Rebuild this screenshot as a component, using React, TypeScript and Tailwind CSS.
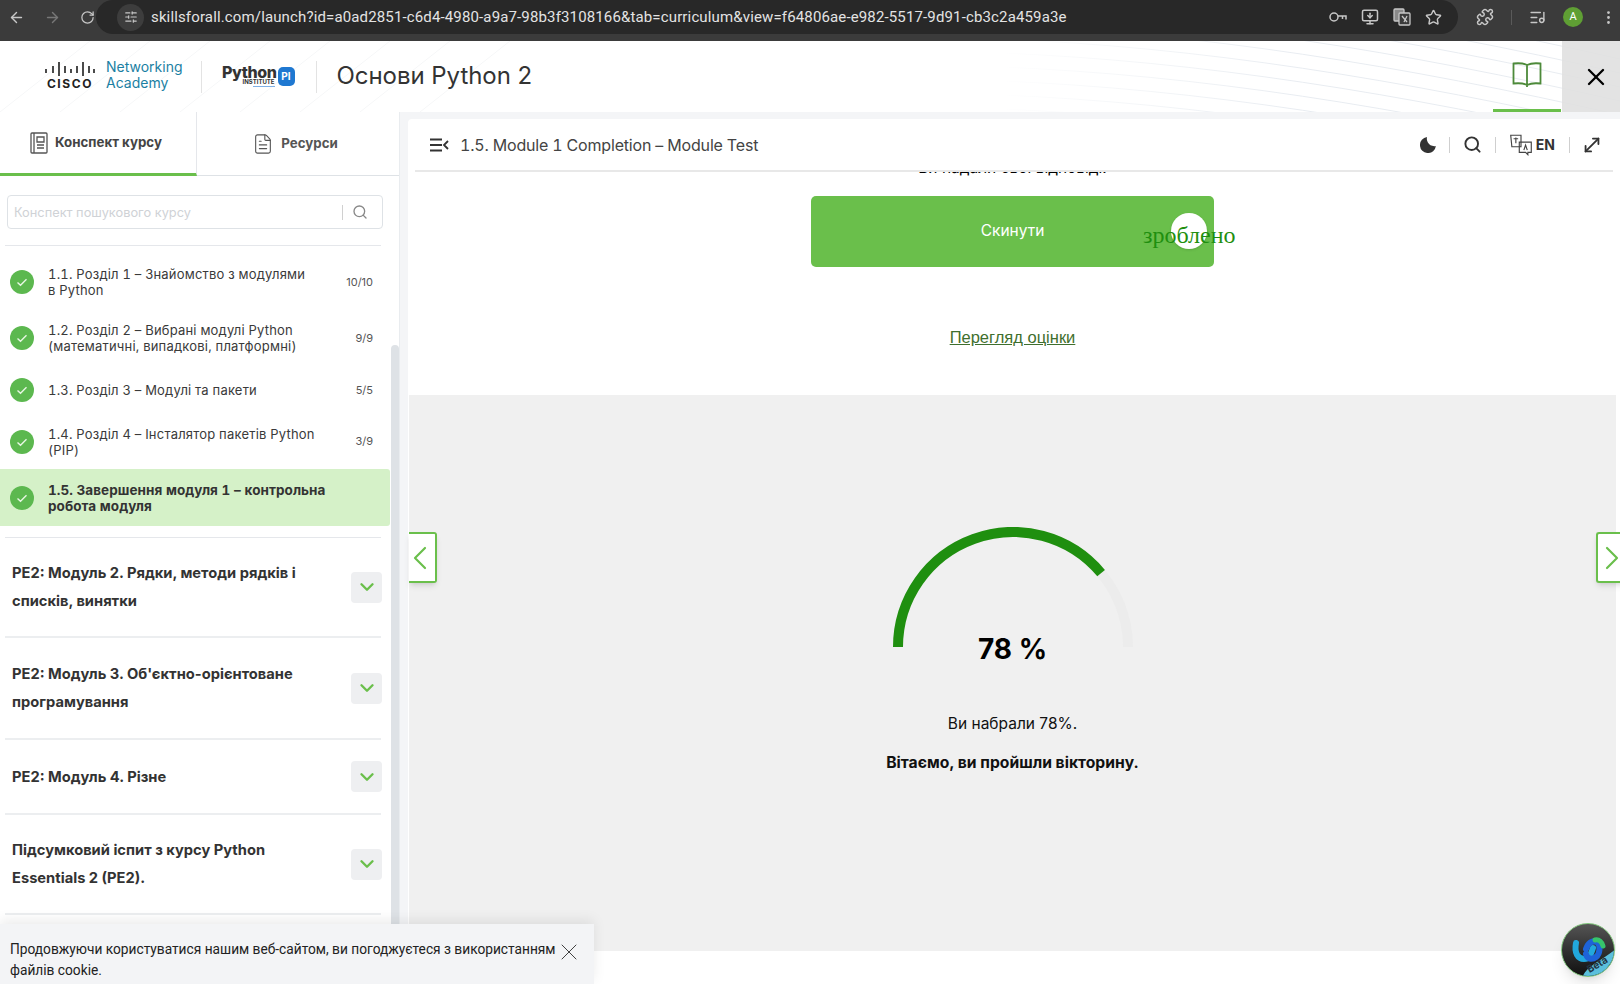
import {
  ArrowLeft,
  ArrowRight,
  ChevronDown,
  ChevronLeft,
  ChevronRight,
  EllipsisVertical,
  FileText,
  ListMusic,
  MonitorDown,
  MoveDiagonal,
  Puzzle,
  RotateCw,
  Search,
  SlidersHorizontal,
  Star,
  X,
} from 'lucide-react';

const lessons = [
  { title: '1.1. Розділ 1 – Знайомство з модулями\nв Python', count: '10/10', h: 'h-[56px]' },
  { title: '1.2. Розділ 2 – Вибрані модулі Python\n(математичні, випадкові, платформні)', count: '9/9', h: 'h-[56px]' },
  { title: '1.3. Розділ 3 – Модулі та пакети', count: '5/5', h: 'h-[48px]' },
  { title: '1.4. Розділ 4 – Інсталятор пакетів Python\n(PIP)', count: '3/9', h: 'h-[55px]' },
];

const modules = [
  { title: 'PE2: Модуль 2. Рядки, методи рядків і списків, винятки', h: 'h-[100px]' },
  { title: "PE2: Модуль 3. Об'єктно-орієнтоване програмування", h: 'h-[102px]' },
  { title: 'PE2: Модуль 4. Різне', h: 'h-[75px]' },
  { title: 'Підсумковий іспит з курсу Python Essentials 2 (PE2).', h: 'h-[100px]' },
];

const curves = [-100, -86, -72, -58, -44, -30, -16, -2, 12, 26, 40, 54, 68];

function CheckCircle() {
  return (
    <svg width="24" height="24" viewBox="0 0 24 24" className="shrink-0">
      <circle cx="12" cy="12" r="12" fill="#5cb84f" />
      <path d="M7.5 12.5l3 2.8 6-6" fill="none" stroke="#e8f6e4" strokeWidth="1.4" />
    </svg>
  );
}

function HeaderLines() {
  return (
    <svg className="absolute inset-0 w-full h-full" viewBox="0 0 1620 71" preserveAspectRatio="none">
      <defs>
        <linearGradient id="curveFade" gradientUnits="userSpaceOnUse" x1="1000" y1="0" x2="1300" y2="0">
          <stop offset="0" stopColor="#e8ecf1" stopOpacity="0" />
          <stop offset="1" stopColor="#e8ecf1" />
        </linearGradient>
      </defs>
      {curves.map((y) => (
        <path key={y} d={`M1000 ${y} C1200 ${y + 8} 1400 ${y + 40} 1620 ${y + 90}`} fill="none" stroke="url(#curveFade)" strokeWidth="1" />
      ))}
      {[0, 60, 120, 180, 240, 300, 360, 420].map((x) => (
        <path key={x} d={`M${x} 71 L${x + 90} 0`} fill="none" stroke="#f6f7f8" strokeWidth="1" />
      ))}
    </svg>
  );
}

function CiscoLogo() {
  return (
    <div className="flex flex-col items-center w-[54px] -mt-[3px]">
      <svg width="54" height="16" viewBox="0 0 50 16">
        {[
          [1, 8, 12],
          [8, 5, 12],
          [14, 1, 15],
          [20, 5, 12],
          [26, 8, 12],
          [32, 5, 12],
          [38, 1, 15],
          [44, 5, 12],
          [49, 8, 12],
        ].map(([x, a, b]) => (
          <line key={x} x1={x} x2={x} y1={a} y2={b} stroke="#2b2b2b" strokeWidth="1.7" />
        ))}
      </svg>
      <span className="text-[12px] leading-[13px] font-bold tracking-[1.6px] text-[#222]">CISCO</span>
    </div>
  );
}

function PythonLogo() {
  return (
    <div className="flex items-center w-[73px]">
      <div className="flex flex-col items-end w-[55px]">
        <span className="text-[16px] leading-[13px] font-extrabold text-[#333] tracking-[-0.4px]">Python</span>
        <span className="text-[6px] leading-[6px] font-bold text-[#333] pr-[2px]">INSTITUTE</span>
        <span className="w-[22px] h-px mt-px mr-[2px] bg-[#7fb0e6]" />
      </div>
      <span className="ml-px w-[17px] h-[19px] rounded-[5px] bg-[#1f78d1] text-white text-[10px] font-bold flex items-center justify-center">
        PI
      </span>
    </div>
  );
}

function MenuCollapse() {
  return (
    <svg width="20" height="14" viewBox="0 0 20 14" fill="none" stroke="#333" strokeWidth="1.8">
      <path d="M1 1.5h12M1 7h12M1 12.5h12M19 3l-4 4 4 4" />
    </svg>
  );
}

function Toolbar() {
  return (
    <div className="h-[41px] bg-[#3b3b3b] flex items-start shrink-0 text-[#c7c7c7]">
      <div className="w-[96px] h-[34px] flex items-center gap-[19px] pl-[8px]">
        <ArrowLeft size={17} />
        <ArrowRight size={17} className="text-[#777]" />
        <RotateCw size={15} />
      </div>
      <div className="w-[1362px] h-[34px] bg-[#282828] rounded-r-[17px] rounded-l-[17px] flex items-center pl-[21px] pr-[16px]">
        <span className="w-[27px] h-[27px] rounded-full bg-[#3d3d3d] flex items-center justify-center">
          <SlidersHorizontal size={14} />
        </span>
        <span className="ml-[7px] text-[15px] text-[#e3e3e3] font-['Roboto',sans-serif] tracking-[0.14px] whitespace-nowrap">
          skillsforall.com/launch?id=a0ad2851-c6d4-4980-a9a7-98b3f3108166&tab=curriculum&view=f64806ae-e982-5517-9d91-cb3c2a459a3e
        </span>
        <div className="ml-auto flex items-center gap-[14px]">
          <svg width="18" height="12" viewBox="0 0 18 12" fill="none" stroke="#c7c7c7" strokeWidth="1.5">
            <circle cx="5" cy="6" r="4" />
            <path d="M9 5h8v3.5M13.5 5v3" />
          </svg>
          <MonitorDown size={18} />
          <svg width="18" height="18" viewBox="0 0 18 18" fill="none" stroke="#c7c7c7" strokeWidth="1.3">
            <rect x="1" y="1" width="10" height="12" rx="1" fill="#8a8a8a" />
            <rect x="6" y="5" width="11" height="12" rx="1" fill="#3b3b3b" />
            <path d="M9 8l5 6M14 8l-3 6" />
          </svg>
          <Star size={17} />
        </div>
      </div>
      <div className="flex-1 h-[34px] flex items-center pl-[18px] gap-[17px]">
        <Puzzle size={18} />
        <span className="w-px h-[15px] bg-[#5a5a5a]" />
        <ListMusic size={17} />
        <span className="w-[20px] h-[20px] rounded-full bg-[#5f9f34] text-white text-[11px] flex items-center justify-center font-['Roboto',sans-serif]">
          A
        </span>
        <EllipsisVertical size={17} />
      </div>
    </div>
  );
}

function TopHeader() {
  return (
    <div className="relative h-[71px] bg-white shrink-0 flex items-center overflow-hidden">
      <HeaderLines />
      <div className="relative flex items-center pl-[43px] h-full flex-1">
        <CiscoLogo />
        <div className="ml-[9px] -mt-[3px] text-[14px] leading-[16px] text-[#1b7fa3]">
          <div>Networking</div>
          <div>Academy</div>
        </div>
        <span className="ml-[18px] w-px h-[32px] bg-[#e3e3e3]" />
        <div className="ml-[20px]">
          <PythonLogo />
        </div>
        <span className="ml-[21px] w-px h-[32px] bg-[#e3e3e3]" />
        <h1 className="ml-[20px] -mt-[2px] text-[24px] text-[#333] font-normal tracking-[-0.05px]">Основи Python 2</h1>
      </div>
      <div className="relative w-[68px] h-full flex items-center justify-center border-b-[3px] border-[#6abf4b]">
        <svg width="30" height="28" viewBox="0 0 30 28" fill="none" stroke="#4d8a3a" strokeWidth="1.8">
          <path d="M15 4C12 2.5 6 2 1.5 2.5v20C6 22 12 22.5 15 24c3-1.5 9-2 13.5-1.5v-20C24 2 18 2.5 15 4zM15 4v22" />
        </svg>
      </div>
      <div className="relative w-[58px] h-full ml-[1px] bg-[#e0e0e0]/90 flex items-center justify-center pl-[10px]">
        <X size={28} strokeWidth={2} className="text-black" />
      </div>
    </div>
  );
}

function Sidebar() {
  return (
    <aside className="w-[400px] shrink-0 bg-white flex flex-col border-r border-[#e9ecef]">
      <div className="h-[64px] flex border-b border-[#dee2e6] text-[13.3px] font-bold text-[#555]">
        <div className="w-[197px] flex items-center justify-center gap-[7px] border-b-[3px] border-[#6abf4b] h-[64px] border-r border-r-[#e5e7eb] pr-[4px] pt-[1px]">
          <svg width="18" height="22" viewBox="0 0 18 22" fill="none" stroke="#555" strokeWidth="1.3">
            <rect x="1" y="1" width="16" height="20" rx="1" />
            <path d="M4 1v20M7 5h7v5H7zM7 13h7M7 16h7" />
          </svg>
          <span className="text-[#444]">Конспект курсу</span>
        </div>
        <div className="flex-1 flex items-center justify-center gap-[7px] pr-[6px]">
          <FileText size={22} strokeWidth={1.2} />
          <span>Ресурси</span>
        </div>
      </div>
      <div className="px-[7px] pt-[19px] pb-[16px]">
        <div className="h-[34px] w-[376px] border border-[#dee2e6] rounded-[4px] flex items-center pl-[6px]">
          <span className="flex-1 pt-[2px] text-[12.8px] text-[#cfd2d6]">Конспект пошукового курсу</span>
          <span className="w-px h-[15px] bg-[#d0d0d0]" />
          <Search size={16} className="text-[#888] mx-[14px] ml-[9px]" />
        </div>
      </div>
      <div className="flex flex-1 min-h-0 overflow-hidden">
        <div className="w-[391px]">
          <div className="ml-[5px] mr-[9px] border-t border-[#e5e7eb] h-[9px]" />
          {lessons.map((l) => (
            <div key={l.title} className={`flex items-center pl-[10px] pr-[17px] ${l.h}`}>
              <CheckCircle />
              <p className="ml-[14px] text-[13px] leading-[16px] text-[#3a3a3a] tracking-[0.2px] tabular-nums whitespace-pre-line">{l.title}</p>
              <span className="ml-auto text-[11px] text-[#555]">{l.count}</span>
            </div>
          ))}
          <div className="h-[57px] bg-[#d5f1c8] rounded-r-[3px] flex items-center pl-[10px] pr-[16px]">
            <CheckCircle />
            <p className="ml-[14px] text-[13.5px] leading-[16px] font-bold text-[#333] tracking-[0.05px] tabular-nums whitespace-pre-line">
              {'1.5. Завершення модуля 1 – контрольна\nробота модуля'}
            </p>
          </div>
          <div className="ml-[5px] mr-[9px] mt-[11px] border-t border-[#e5e7eb]">
            {modules.map((m) => (
              <div key={m.title} className={`flex items-center border-b-2 border-[#eceef0] pl-[7px] ${m.h}`}>
                <p className="w-[310px] text-[14.7px] leading-[28px] font-bold text-[#333]">{m.title}</p>
                <span className="ml-auto -mr-px w-[31px] h-[31px] rounded-[4px] bg-[#eeeff1] flex items-center justify-center">
                  <ChevronDown size={22} strokeWidth={2.6} className="text-[#6abf4b]" />
                </span>
              </div>
            ))}
          </div>
        </div>
        <div className="w-[8px] ml-[1px] mt-[100px] bg-[#dee2e6] rounded-t-[4px]" />
      </div>
    </aside>
  );
}

function Gauge() {
  return (
    <svg width="240" height="122" viewBox="0 0 240 122" className="block">
      <path d="M5 120A115 115 0 0 1 235 120" fill="none" stroke="#ececec" strokeWidth="10" />
      <path d="M5 120A115 115 0 0 1 208.1 46.1" fill="none" stroke="#1f8f0f" strokeWidth="10" />
    </svg>
  );
}

function CardHeader() {
  return (
    <div className="h-[53px] shrink-0 mx-[7px] border-b-2 border-[#e8e8e8] flex items-center pl-[14px] pr-[10px] bg-white">
      <MenuCollapse />
      <span className="ml-[11px] text-[16px] text-[#444] tracking-[-0.18px] tabular-nums">1.5. Module 1 Completion – Module Test</span>
      <div className="ml-auto flex items-center text-[#333]">
        <svg width="16" height="16" viewBox="0 0 16 16" fill="#333">
          <path d="M7 0.1A8 8 0 1 0 15.9 9 7.5 7.5 0 0 1 7 0.1z" />
        </svg>
        <span className="w-px h-[16px] bg-[#cfcfcf] mx-[13px]" />
        <Search size={19} strokeWidth={2.4} />
        <span className="w-px h-[16px] bg-[#cfcfcf] mx-[13px]" />
        <svg width="24" height="22" viewBox="0 0 21 19" fill="none" stroke="#444" strokeWidth="1">
          <path d="M1.5 1h9v10h-6l-2 0zM9 7h10.5v9h-3v2l-2-2H9z" />
          <path d="M4 4h4M6 3v5M13 14l1.5-4.5L16 14" />
        </svg>
        <span className="ml-[3px] text-[14px] font-bold">EN</span>
        <span className="w-px h-[16px] bg-[#cfcfcf] ml-[14px] mr-[11px]" />
        <MoveDiagonal size={22} strokeWidth={2} />
      </div>
    </div>
  );
}

export default function App() {
  return (
    <div className="relative w-[1620px] h-[984px] overflow-hidden flex flex-col bg-white font-['Inter',sans-serif]">
      <Toolbar />
      <TopHeader />
      <main className="flex flex-1 min-h-0 bg-[#f4f5f7]">
        <Sidebar />
        <section className="relative flex-1 mt-[7px] ml-[8px] bg-white rounded-tl-[4px] flex flex-col min-h-0">
          <CardHeader />
          <div className="w-[1209px] flex-1 overflow-hidden flex flex-col items-center">
            <p className="-mt-[16px] h-[24px] leading-[24px] text-[15.5px] text-black">Ви надали свої відповіді.</p>
            <button className="relative mt-[16px] w-[403px] h-[71px] rounded-[5px] bg-[#6abf4b] text-white text-[15.5px] shrink-0">
              <span className="relative -top-[1px]">Скинути</span>
              <span className="absolute left-[360px] top-[17px] w-[36px] h-[36px] rounded-full bg-white shadow-sm" />
              <span className="absolute left-[332px] top-[25px] text-[24px] leading-[28px] text-[#1f8f0f] font-['Liberation_Serif',serif]">
                зроблено
              </span>
            </button>
            <a className="mt-[58px] text-[16.5px] leading-[24px] text-[#3f6f2e] underline font-['Liberation_Sans',sans-serif]">
              Перегляд оцінки
            </a>
            <div className="mt-[46px] w-[1207px] h-[556px] shrink-0 bg-[#f0f0f0] flex flex-col items-center pt-[132px]">
              <div className="relative">
                <Gauge />
                <span className="absolute left-0 right-0 top-[102px] text-center text-[28px] leading-[40px] font-bold text-black">
                  78 %
                </span>
              </div>
              <p className="mt-[63px] text-[15.5px] leading-[24px] text-[#111]">Ви набрали 78%.</p>
              <p className="mt-[15px] text-[15.7px] leading-[24px] font-bold text-[#111]">Вітаємо, ви пройшли вікторину.</p>
            </div>
          </div>
          <div className="absolute left-px top-[413px] w-[28px] h-[51px] bg-white border-y-2 border-r-2 border-[#6abf4b] rounded-r-[3px] shadow-md flex items-center justify-center pr-[4px]">
            <ChevronLeft size={40} strokeWidth={1.3} className="shrink-0 text-[#6abf4b]" />
          </div>
          <div className="absolute -right-[6px] top-[413px] w-[30px] h-[51px] bg-white border-y-2 border-l-2 border-[#6abf4b] rounded-l-[3px] shadow-md flex items-center justify-center">
            <ChevronRight size={40} strokeWidth={1.3} className="shrink-0 text-[#6abf4b]" />
          </div>
        </section>
      </main>

      <div className="absolute left-0 bottom-0 w-[594px] h-[60px] bg-[#f3f4f6] shadow-[0_-4px_12px_rgba(0,0,0,0.08)] pl-[10px] pt-[15px] text-[13.73px] leading-[21px] text-[#222] font-['Roboto',sans-serif]">
        <p className="w-[560px]">Продовжуючи користуватися нашим веб-сайтом, ви погоджуєтеся з використанням файлів cookie.</p>
        <X size={28} strokeWidth={0.8} className="absolute left-[555px] top-[14px] text-[#333]" />
      </div>

      <div className="absolute left-[1561px] top-[923px] w-[54px] h-[54px] rounded-full border border-[#7fc37a] bg-gradient-to-b from-[#555] to-[#111] overflow-hidden shadow-lg">
        <svg width="54" height="54" viewBox="0 0 54 54" fill="none">
          <path d="M14 19c-2 10 2 16 8 16s7-6 9-11" stroke="#22a8dc" strokeWidth="6" strokeLinecap="round" />
          <path d="M24 25c2-6 6-9 11-7 4 3 3 12-1 15-4 3-9 2-10-3" stroke="#1e63d8" strokeWidth="6" strokeLinecap="round" />
          <path d="M33 16c4-1 7 2 8 6" stroke="#37c46b" strokeWidth="5" strokeLinecap="round" />
          <path d="M20 54C24 42 38 38 54 25V54z" fill="#5bbfdc" />
        </svg>
        <span className="absolute left-[24px] top-[34px] -rotate-[30deg] text-[10px] leading-[12px] font-bold text-[#234]">Beta</span>
      </div>
    </div>
  );
}
